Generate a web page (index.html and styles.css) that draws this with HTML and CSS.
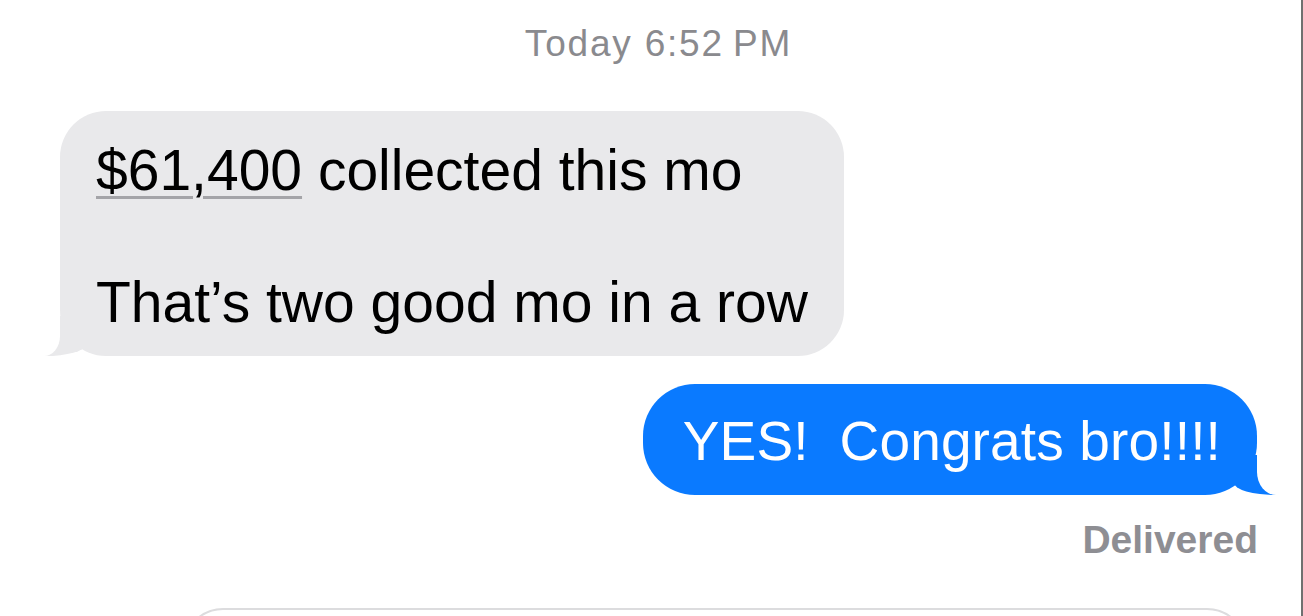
FILE: index.html
```html
<!DOCTYPE html>
<html lang="en">
<head>
    <meta charset="UTF-8">
    <meta name="viewport" content="width=device-width, initial-scale=1.0">
    <title>Messages</title>
    <link rel="stylesheet" href="styles.css">
</head>
<body>
    <div class="screen">
        <div class="stamp"><span class="day">Today</span> 6:52&#8239;PM</div>

        <div class="msg msg-in">
            <span class="amount">$61,400</span> collected this mo<br><br>That&rsquo;s two good mo in a row
        </div>

        <div class="msg msg-out">YES!&nbsp; Congrats bro!!!!</div>

        <div class="status">Delivered</div>

        <div class="composer"></div>
    </div>
</body>
</html>
```

FILE: styles.css
```css
* {
    margin: 0;
    padding: 0;
    box-sizing: border-box;
}

body {
    background-color: #fff;
    font-family: "Liberation Sans", Arial, sans-serif;
}

.screen {
    width: 1303px;
    height: 616px;
    overflow: hidden;
    border-right: 2px solid #707070;
    display: flex;
    flex-direction: column;
}

/* hora no topo */
.stamp {
    padding-top: 24px;
    padding-left: 16px;
    text-align: center;
    font-size: 37px;
    line-height: 40px;
    letter-spacing: 1.8px;
    color: #8a8a8e;
}

.msg {
    position: relative;
    line-height: 66px;
}

/* balão recebido (cinza) */
.msg-in {
    align-self: flex-start;
    margin-top: 47px;
    margin-left: 60px;
    padding: 26px 36px 21px 36px;
    font-size: 57px;
    color: #000;
    background-color: #e9e9eb;
    border-radius: 46px;
}

.amount {
    text-decoration: underline;
    text-decoration-color: #a4a4a8;
    text-decoration-thickness: 3px;
    text-underline-offset: 6px;
}

/* rabinho do balão cinza */
.msg-in::before {
    content: "";
    position: absolute;
    bottom: 0;
    left: -18px;
    width: 43px;
    height: 40px;
    background-color: #e9e9eb;
    border-bottom-right-radius: 40px 11px;
}

.msg-in::after {
    content: "";
    position: absolute;
    bottom: 0;
    left: -40px;
    width: 40px;
    height: 40px;
    background-color: #fff;
    border-bottom-right-radius: 16px 20px;
}

/* balão enviado (azul) */
.msg-out {
    align-self: flex-end;
    margin-top: 28px;
    margin-right: 44px;
    padding: 26px 36px 23px 40px;
    font-size: 55px;
    line-height: 62px;
    letter-spacing: 0.15px;
    color: #fff;
    background-color: #0a7aff;
    border-radius: 52px;
}

.msg-out::before {
    content: "";
    position: absolute;
    bottom: 0;
    right: -24px;
    width: 47px;
    height: 40px;
    background-color: #0a7aff;
    border-bottom-left-radius: 42px 12px;
}

.msg-out::after {
    content: "";
    position: absolute;
    bottom: 0;
    left: 100%;
    width: 40px;
    height: 40px;
    background-color: #fff;
    border-bottom-left-radius: 19px 23px;
}

.status {
    align-self: flex-end;
    margin-top: 23px;
    margin-right: 43px;
    font-size: 39px;
    font-weight: bold;
    line-height: 44px;
    color: #8e8e93;
}

/* campo de texto no rodapé */
.composer {
    flex-shrink: 0;
    margin-top: 46px;
    margin-left: 183px;
    margin-right: 54px;
    height: 80px;
    border: 2px solid #dcdcde;
    border-radius: 40px;
}
```
